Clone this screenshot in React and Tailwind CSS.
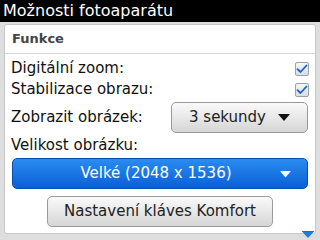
import React from 'react';

const Check = () => (
  <div className="w-[14px] h-[14px] rounded-[2px] border border-[#9aa3ad] bg-gradient-to-b from-[#f4f6f8] to-[#d9dee3] flex items-center justify-center">
    <svg width="12" height="10" viewBox="0 0 12 10">
      <path d="M1.5 5.2 L4.5 8 L10.5 1.5" fill="none" stroke="#1565c8" strokeWidth="1.8" strokeLinecap="round" strokeLinejoin="round" />
    </svg>
  </div>
);

const App = () => {
  return (
    <div className="w-[320px] h-[240px] overflow-hidden bg-[#dedede] relative" style={{ fontFamily: '"DejaVu Sans", sans-serif' }}>
      <div className="h-[22px] bg-black text-white text-[16px] leading-[22px] pl-[3px]">Možnosti fotoaparátu</div>

      <div className="mx-[4px] mt-[2px] h-[210px] bg-white rounded-[3px] border border-[#c8c8c8] text-[#111]">
        <div className="h-[29px] px-[7px] flex items-center font-bold text-[13px] text-[#444] border-b border-[#d4d4d4]">Funkce</div>

        <div className="flex items-center justify-between pl-[6px] pr-[6px] h-[21px] mt-[4px] text-[15px]">
          <span>Digitální zoom:</span>
          <Check />
        </div>
        <div className="flex items-center justify-between pl-[6px] pr-[6px] h-[21px] text-[15px]">
          <span>Stabilizace obrazu:</span>
          <Check />
        </div>

        <div className="flex items-center justify-between pl-[6px] pr-[7px] mt-[2px] h-[31px] text-[15px]">
          <span>Zobrazit obrázek:</span>
          <div className="w-[137px] h-[31px] rounded-[5px] border border-[#9a9a9a] bg-gradient-to-b from-[#fafafa] to-[#d6d6d6] flex items-center justify-center gap-[12px]">
            <span className="text-[#222]">3 sekundy</span>
            <svg width="12" height="8" viewBox="0 0 12 8"><path d="M0 0 H12 L6 7 Z" fill="#111" /></svg>
          </div>
        </div>

        <div className="pl-[6px] h-[25px] flex items-end pb-[2px] text-[15px]">Velikost obrázku:</div>

        <div className="mx-[7px] h-[31px] rounded-[5px] border border-[#0b4fae] bg-gradient-to-b from-[#2b8cf0] to-[#0a5fd6] flex items-center relative text-white text-[15px]">
          <span className="flex-1 text-center pr-[8px]">Velké (2048 x 1536)</span>
          <svg className="absolute right-[16px] top-[12px]" width="11" height="7" viewBox="0 0 11 7"><path d="M0 0 H11 L5.5 6.5 Z" fill="#fff" /></svg>
        </div>

        <div className="flex justify-center mt-[7px]">
          <div className="w-[226px] h-[31px] rounded-[5px] border border-[#9a9a9a] bg-gradient-to-b from-[#fafafa] to-[#d6d6d6] flex items-center justify-center text-[15px] text-[#222]">
            Nastavení kláves Komfort
          </div>
        </div>
      </div>

      <svg className="absolute left-[302px] top-[231px]" width="12" height="7" viewBox="0 0 12 7">
        <path d="M0 0 H12 L6 6.5 Z" fill="#1a7de0" stroke="#0b4fae" strokeWidth="0.6" />
      </svg>
    </div>
  );
};

export default App;
